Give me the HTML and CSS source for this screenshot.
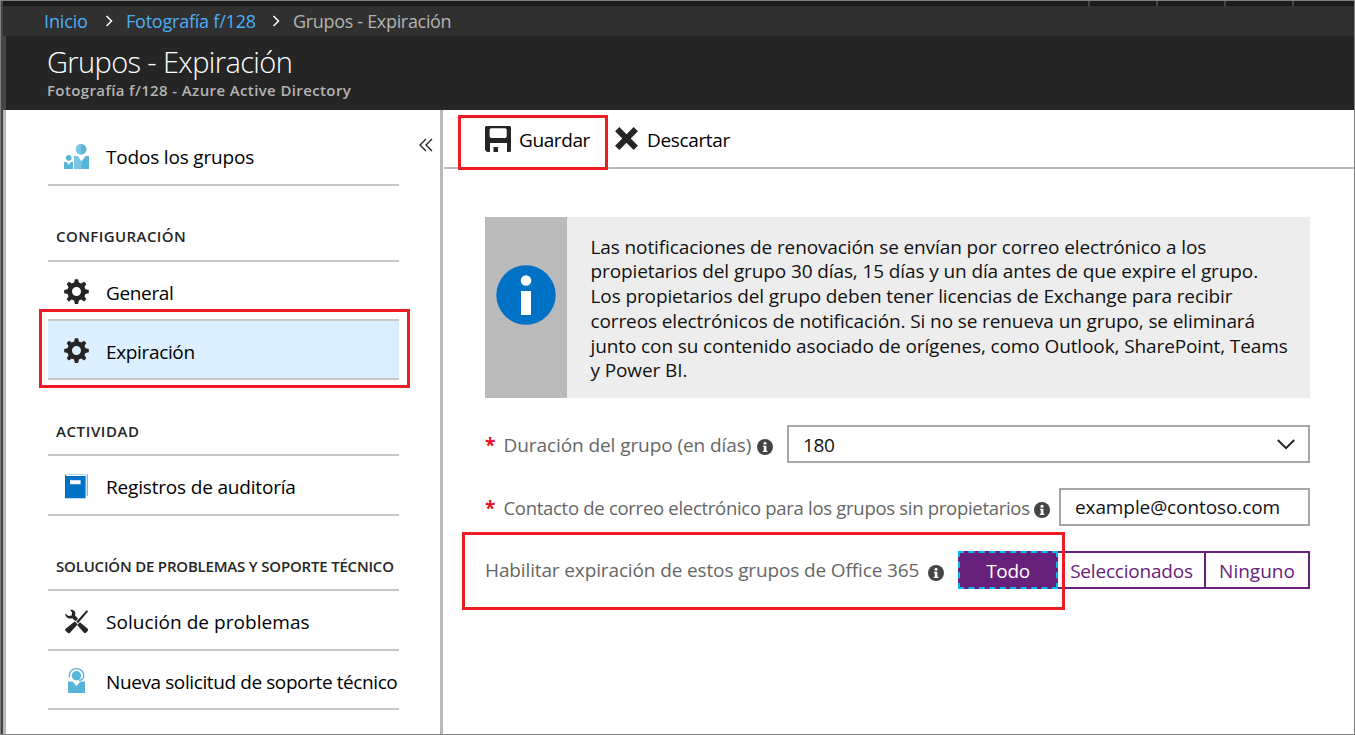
FILE: index.html
```html
<!DOCTYPE html>
<html lang="es">
<head>
<meta charset="utf-8">
<title>Grupos - Expiración</title>
<link rel="stylesheet" href="styles.css">
</head>
<body>
<svg class="defs" aria-hidden="true">
  <symbol id="gear" viewBox="0 0 25 25">
    <path fill="#252525" fill-rule="evenodd" d="M10.900 .3h3.200l.8 3.300 2.300 1 2.900-1.800 2.200 2.200-1.800 2.900 1 2.300 3.300.8v3.200l-3.300.8-1 2.300 1.800 2.900-2.200 2.200-2.900-1.800-2.300 1-.8 3.300h-3.200l-.8-3.300-2.300-1-2.900 1.800-2.200-2.200 1.800-2.900-1-2.300-3.300-.8v-3.200l3.300-.8 1-2.300-1.800-2.900 2.200-2.200 2.900 1.800 2.300-1zM12.500 8a4.500 4.500 0 1 0 0 9a4.500 4.500 0 0 0 0-9z"/>
  </symbol>
  <symbol id="info" viewBox="0 0 16 16">
    <circle cx="8" cy="8" r="8" fill="#444"/>
    <circle cx="8" cy="4.300" r="1.500" fill="#fff"/>
    <path fill="#fff" d="M6 6.700h3.400v5h1v1.300H5.800v-1.300h1V8H6z"/>
  </symbol>
  <symbol id="crumb" viewBox="0 0 8 12">
    <path d="M1.500 1l5 5-5 5" fill="none" stroke="#fff" stroke-width="1.500"/>
  </symbol>
</svg>
<div class="window">
  <div class="topbar"><i></i><i></i><i></i><i></i></div>
  <nav class="crumbs">
    <a class="crumb-home">Inicio</a>
    <svg class="sep"><use href="#crumb"/></svg>
    <a class="crumb-dir">Fotografía f/128</a>
    <svg class="sep"><use href="#crumb"/></svg>
    <span class="crumb-here">Grupos - Expiración</span>
  </nav>
  <header class="title">
    <h1>Grupos - Expiración</h1>
    <h2>Fotografía f/128 - Azure Active Directory</h2>
  </header>
  <div class="body">
    <aside class="side">
      <svg class="collapse" viewBox="0 0 14 14"><path d="M7 1L1 7l6 6M13 1L7 7l6 6" fill="none" stroke="#252525" stroke-width="1.400"/></svg>
      <a class="item first">
        <svg viewBox="0 0 25 25">
          <circle cx="17.200" cy="5.300" r="5.300" fill="#59b4d9"/><path d="M17.200 0a5.300 5.300 0 0 0 0 10.600z" fill="#7cc4e2"/>
          <path d="M10 12h3.500l4 5.500 4-5.500H25v13H10z" fill="#59b4d9"/><path d="M10 12h3.500l4 5.500V25H10z" fill="#7cc4e2"/>
          <circle cx="4.700" cy="13.800" r="2.900" fill="#59b4d9"/>
          <path d="M0 18h2.500l2.200 2.800L7 18h2v7H0z" fill="#59b4d9"/>
        </svg>
        <span class="t-todos">Todos los grupos</span>
      </a>
      <h3 class="group g-config">Configuración</h3>
      <a class="item"><svg><use href="#gear"/></svg><span class="t-short">General</span></a>
      <a class="item selected"><svg><use href="#gear"/></svg><span class="t-short">Expiración</span><b class="mark mark-item"></b></a>
      <h3 class="group g-act">Actividad</h3>
      <a class="item tall">
        <svg viewBox="0 0 25 25"><path d="M2 .2h22v21.800h-2.500z" fill="#7fb9e3"/><path d="M2.600 1.300h19.500V22" fill="none" stroke="#fff" stroke-width="1.200"/><path d="M1 .2l1.500 1.700h19V24.200H1z" fill="#0072c6"/><path d="M6 6.200h10.600v4H6z" fill="#fff"/></svg>
        <span class="t-norm">Registros de auditoría</span>
      </a>
      <h3 class="group g-sup">Solución de problemas y soporte técnico</h3>
      <a class="item tall">
        <svg viewBox="0 0 25 25">
          <path d="M22.600 1.200l1.500 1.200L14 14.200l-1.700-1.500z" fill="#252525"/>
          <path d="M10.700 12.500l3 2.800L6 23.700q-1 1.100-2 .2L1.500 21.700q-.9-1 .1-2z" fill="#252525"/>
          <path d="M6 .7C10.500.2 12 3 11.100 6.500l3 3.200-2.600 2.500-3.200-2.900C5 10.200 1.300 9 1.200 4.600L4.500 7l3.200-.6.3-3z" fill="#252525"/>
          <path d="M16 13.300l7.400 6.200q1.400 1.200.3 2.500l-1.500 1.600q-1.300 1.100-2.500-.2L13.300 16z" fill="#252525"/>
        </svg>
        <span class="t-sol">Solución de problemas</span>
      </a>
      <a class="item">
        <svg viewBox="0 0 25 25">
          <path d="M5.500 9.500C4.500 3.500 8.500.6 12.500.6s8 2.900 7 8.900C18.800 11.500 17 12.300 15 12.500" fill="none" stroke="#59b4d9" stroke-width="1.300"/>
          <circle cx="12.500" cy="7.800" r="4.700" fill="#59b4d9"/>
          <path d="M4 13.500h4.500l4 4.500 4-4.500H21V25H4z" fill="#59b4d9"/>
        </svg>
        <span class="t-nueva">Nueva solicitud de soporte técnico</span>
      </a>
    </aside>
    <main class="main">
      <div class="tools">
        <button class="tool save">
          <svg viewBox="0 0 26 26"><path fill="#252525" fill-rule="evenodd" d="M1 0h24l1 1v24l-1 1h-3V17H5v9H2l-2-2V1zM5.800 2.200L4.600 3.400v7.400l1.200 1.200H20.500l1.200-1.200V3.400L20.500 2.200z"/><path d="M8.500 21H13v5H8.500z" fill="#252525"/></svg>
          <span>Guardar</span><b class="mark mark-save"></b>
        </button>
        <button class="tool discard">
          <svg viewBox="0 0 23 23"><path d="M2.200 2.200l18.600 18.600M20.800 2.200L2.200 20.800" stroke="#252525" stroke-width="6"/></svg>
          <span>Descartar</span>
        </button>
      </div>
      <section class="content">
        <div class="notice">
          <div class="notice-icon">
            <svg viewBox="0 0 60 60"><circle cx="30" cy="30" r="29.700" fill="#0072c6"/><circle cx="30" cy="15.500" r="5.300" fill="#fff"/><path d="M25 26h10v24H25z" fill="#fff"/></svg>
          </div>
          <p>Las notificaciones de renovación se envían por correo electrónico a los<br>propietarios del grupo 30 días, 15 días y un día antes de que expire el grupo.<br>Los propietarios del grupo deben tener licencias de Exchange para recibir<br>correos electrónicos de notificación. Si no se renueva un grupo, se eliminará<br>junto con su contenido asociado de orígenes, como Outlook, SharePoint, Teams<br>y Power BI.</p>
        </div>
        <div class="field life">
          <label><em>*</em><span>Duración del grupo (en días)</span></label>
          <svg class="info"><use href="#info"/></svg>
          <div class="box select"><span>180</span><svg viewBox="0 0 18 11"><path d="M.8 1L9 9.200 17.200 1" fill="none" stroke="#252525" stroke-width="2"/></svg></div>
        </div>
        <div class="field contact">
          <label><em>*</em><span>Contacto de correo electrónico para los grupos sin propietarios</span></label>
          <svg class="info"><use href="#info"/></svg>
          <div class="box mail"><span>example@contoso.com</span></div>
        </div>
        <div class="field enable">
          <label><span>Habilitar expiración de estos grupos de Office 365</span></label>
          <svg class="info"><use href="#info"/></svg>
          <div class="toggle"><span class="on">Todo</span><span class="some">Seleccionados</span><span class="none">Ninguno</span></div>
          <b class="mark mark-field"></b>
        </div>
      </section>
    </main>
  </div>
</div>
</body>
</html>
```
FILE: styles.css
```css
* { box-sizing: border-box; }
body { margin: 0; font: 19px/26px "Open Sans", sans-serif; color: #000; background: #fff; overflow: hidden; }
h1, h2, h3, p { margin: 0; }
svg { display: block; flex: none; }
span, a, label { white-space: nowrap; }
.defs { position: absolute; width: 0; height: 0; }

.window { height: 735px; display: flex; flex-direction: column; border: 1px solid #808080; }
.topbar { height: 5px; flex: none; background: #1b1b1b; border-left: 2px solid #444; display: flex; justify-content: flex-end; gap: 66px; padding-right: 60px; }
.topbar i { width: 2px; background: #444; }
.crumbs { height: 30px; flex: none; background: #303030; border-left: 2px solid #444; padding-left: 41px; display: flex; align-items: center; font-size: 18px; color: #b3b3b3; }
.crumbs a { color: #4badf7; }
.crumb-home { width: 61px; letter-spacing: -.15px; }
.crumb-dir { width: 140px; margin-left: 13px; letter-spacing: -.22px; }
.crumb-here { margin-left: 13px; letter-spacing: -.32px; }
.sep { width: 8px; height: 12px; }
.crumb-dir + .sep { margin-left: 6px; }

.title { height: 74px; flex: none; background: #252525; border-left: 5px solid #444; padding: 6px 0 0 41px; }
h1 { font-size: 29px; font-weight: 300; line-height: 40px; letter-spacing: -.62px; color: #fff; }
h2 { font-size: 15px; font-weight: 600; line-height: 17px; letter-spacing: .38px; color: #b3b3b3; }

.body { flex: 1; min-height: 0; display: flex; border-left: 2px solid #444; }
.side { position: relative; width: 440px; flex: none; border-left: 3px solid #b9b9b9; border-right: 3px solid #b9b9b9; padding: 0 41px 0 42px; }
.collapse { position: absolute; left: 413px; top: 28px; width: 14px; height: 14px; }
.item { position: relative; display: flex; align-items: center; height: 59px; padding: 2px 0 0 16px; border-bottom: 2px solid #c8c8c8; }
.item svg { width: 25px; height: 25px; margin-right: 17px; }
.item span { padding-top: 2px; letter-spacing: -.18px; }
.item .t-short { letter-spacing: -.35px; }
.item.tall { height: 60px; }
.item.first { height: 76px; padding-top: 19px; }
.item.first span { padding-top: 1px; letter-spacing: -.18px; }
.item .t-sol { letter-spacing: .05px; }
.item .t-nueva { letter-spacing: -.4px; }
.item.selected { background: #dceffe; }
.group { display: flex; align-items: flex-end; height: 76px; padding: 0 0 12px 8px; border-bottom: 2px solid #c8c8c8; font-size: 15px; line-height: 21px; font-weight: 600; color: #252525; text-transform: uppercase; white-space: nowrap; }
.g-config { padding-bottom: 13px; letter-spacing: .42px; }
.g-act { letter-spacing: .6px; }
.g-sup { height: 75px; letter-spacing: -.19px; }

.mark { position: absolute; border: 3px solid #ed1c24; z-index: 2; }
.mark-item { left: -9px; top: -12px; width: 371px; height: 79px; }
.mark-save { left: -27px; top: 5px; width: 150px; height: 55px; }
.mark-field { left: -23px; top: -19px; width: 603px; height: 78px; }

.main { flex: 1; min-width: 0; }
.tools { height: 59px; margin-left: 1px; border-bottom: 2px solid #b9b9b9; padding-left: 41px; display: flex; }
.tool { position: relative; display: flex; align-items: center; border: 0; padding: 0; background: none; font: inherit; color: #000; }
.tool span { padding-top: 2px; }
.save { width: 130px; }
.save svg { width: 26px; height: 26px; margin-right: 8px; }
.save span { letter-spacing: -.4px; }
.discard svg { width: 23px; height: 23px; margin-right: 9px; }
.discard span { letter-spacing: -.35px; }

.content { padding: 48px 44px 0 42px; }
.notice { display: flex; height: 181px; background: #ededed; }
.notice-icon { width: 82px; background: #bababa; padding: 48px 0 0 11px; }
.notice-icon svg { width: 60px; height: 60px; }
.notice p { padding: 17.5px 0 0 23.500px; line-height: 24.8px; letter-spacing: -.11px; color: #111; white-space: nowrap; }

.field { position: relative; display: flex; align-items: center; height: 38px; color: #666; }
.life { margin-top: 27px; }
.contact, .enable { margin-top: 25px; }
.field label { display: flex; align-items: center; padding-top: 1px; }
.field em { width: 18.5px; font-style: normal; font-weight: 700; color: #e81123; }
.info { width: 16px; height: 16px; margin-top: 6px; }
.life label { width: 272px; }
.life label span { letter-spacing: -.08px; }
.contact label { width: 549px; }
.contact label span { font-size: 18.5px; letter-spacing: -.29px; }
.enable label { width: 443px; padding: 0 0 1px; letter-spacing: -.13px; }
.enable .info { margin-top: 5px; }
.box { margin-left: auto; height: 38px; border: 2px solid #a6a6a6; display: flex; align-items: center; justify-content: space-between; padding: 0 13px 0 14px; color: #111; }
.select { width: 523px; }
.select span { padding-top: 1px; letter-spacing: -.4px; }
.select svg { width: 18px; height: 11px; margin-top: 1px; }
.mail { width: 251px; }
.mail span { letter-spacing: -.1px; }
.toggle { margin-left: auto; width: 352px; height: 38px; display: flex; color: #68217a; }
.toggle span { display: flex; align-items: center; justify-content: center; border: 2px solid #68217a; padding-top: 1px; }
.toggle .on { width: 100px; background: #68217a; color: #fff; border: 2px dashed #00bcf2; letter-spacing: -.3px; }
.toggle .some { width: 148px; border-left: 0; padding-left: 1px; letter-spacing: -.2px; }
.toggle .none { width: 104px; border-left: 0; letter-spacing: 0; }
```
